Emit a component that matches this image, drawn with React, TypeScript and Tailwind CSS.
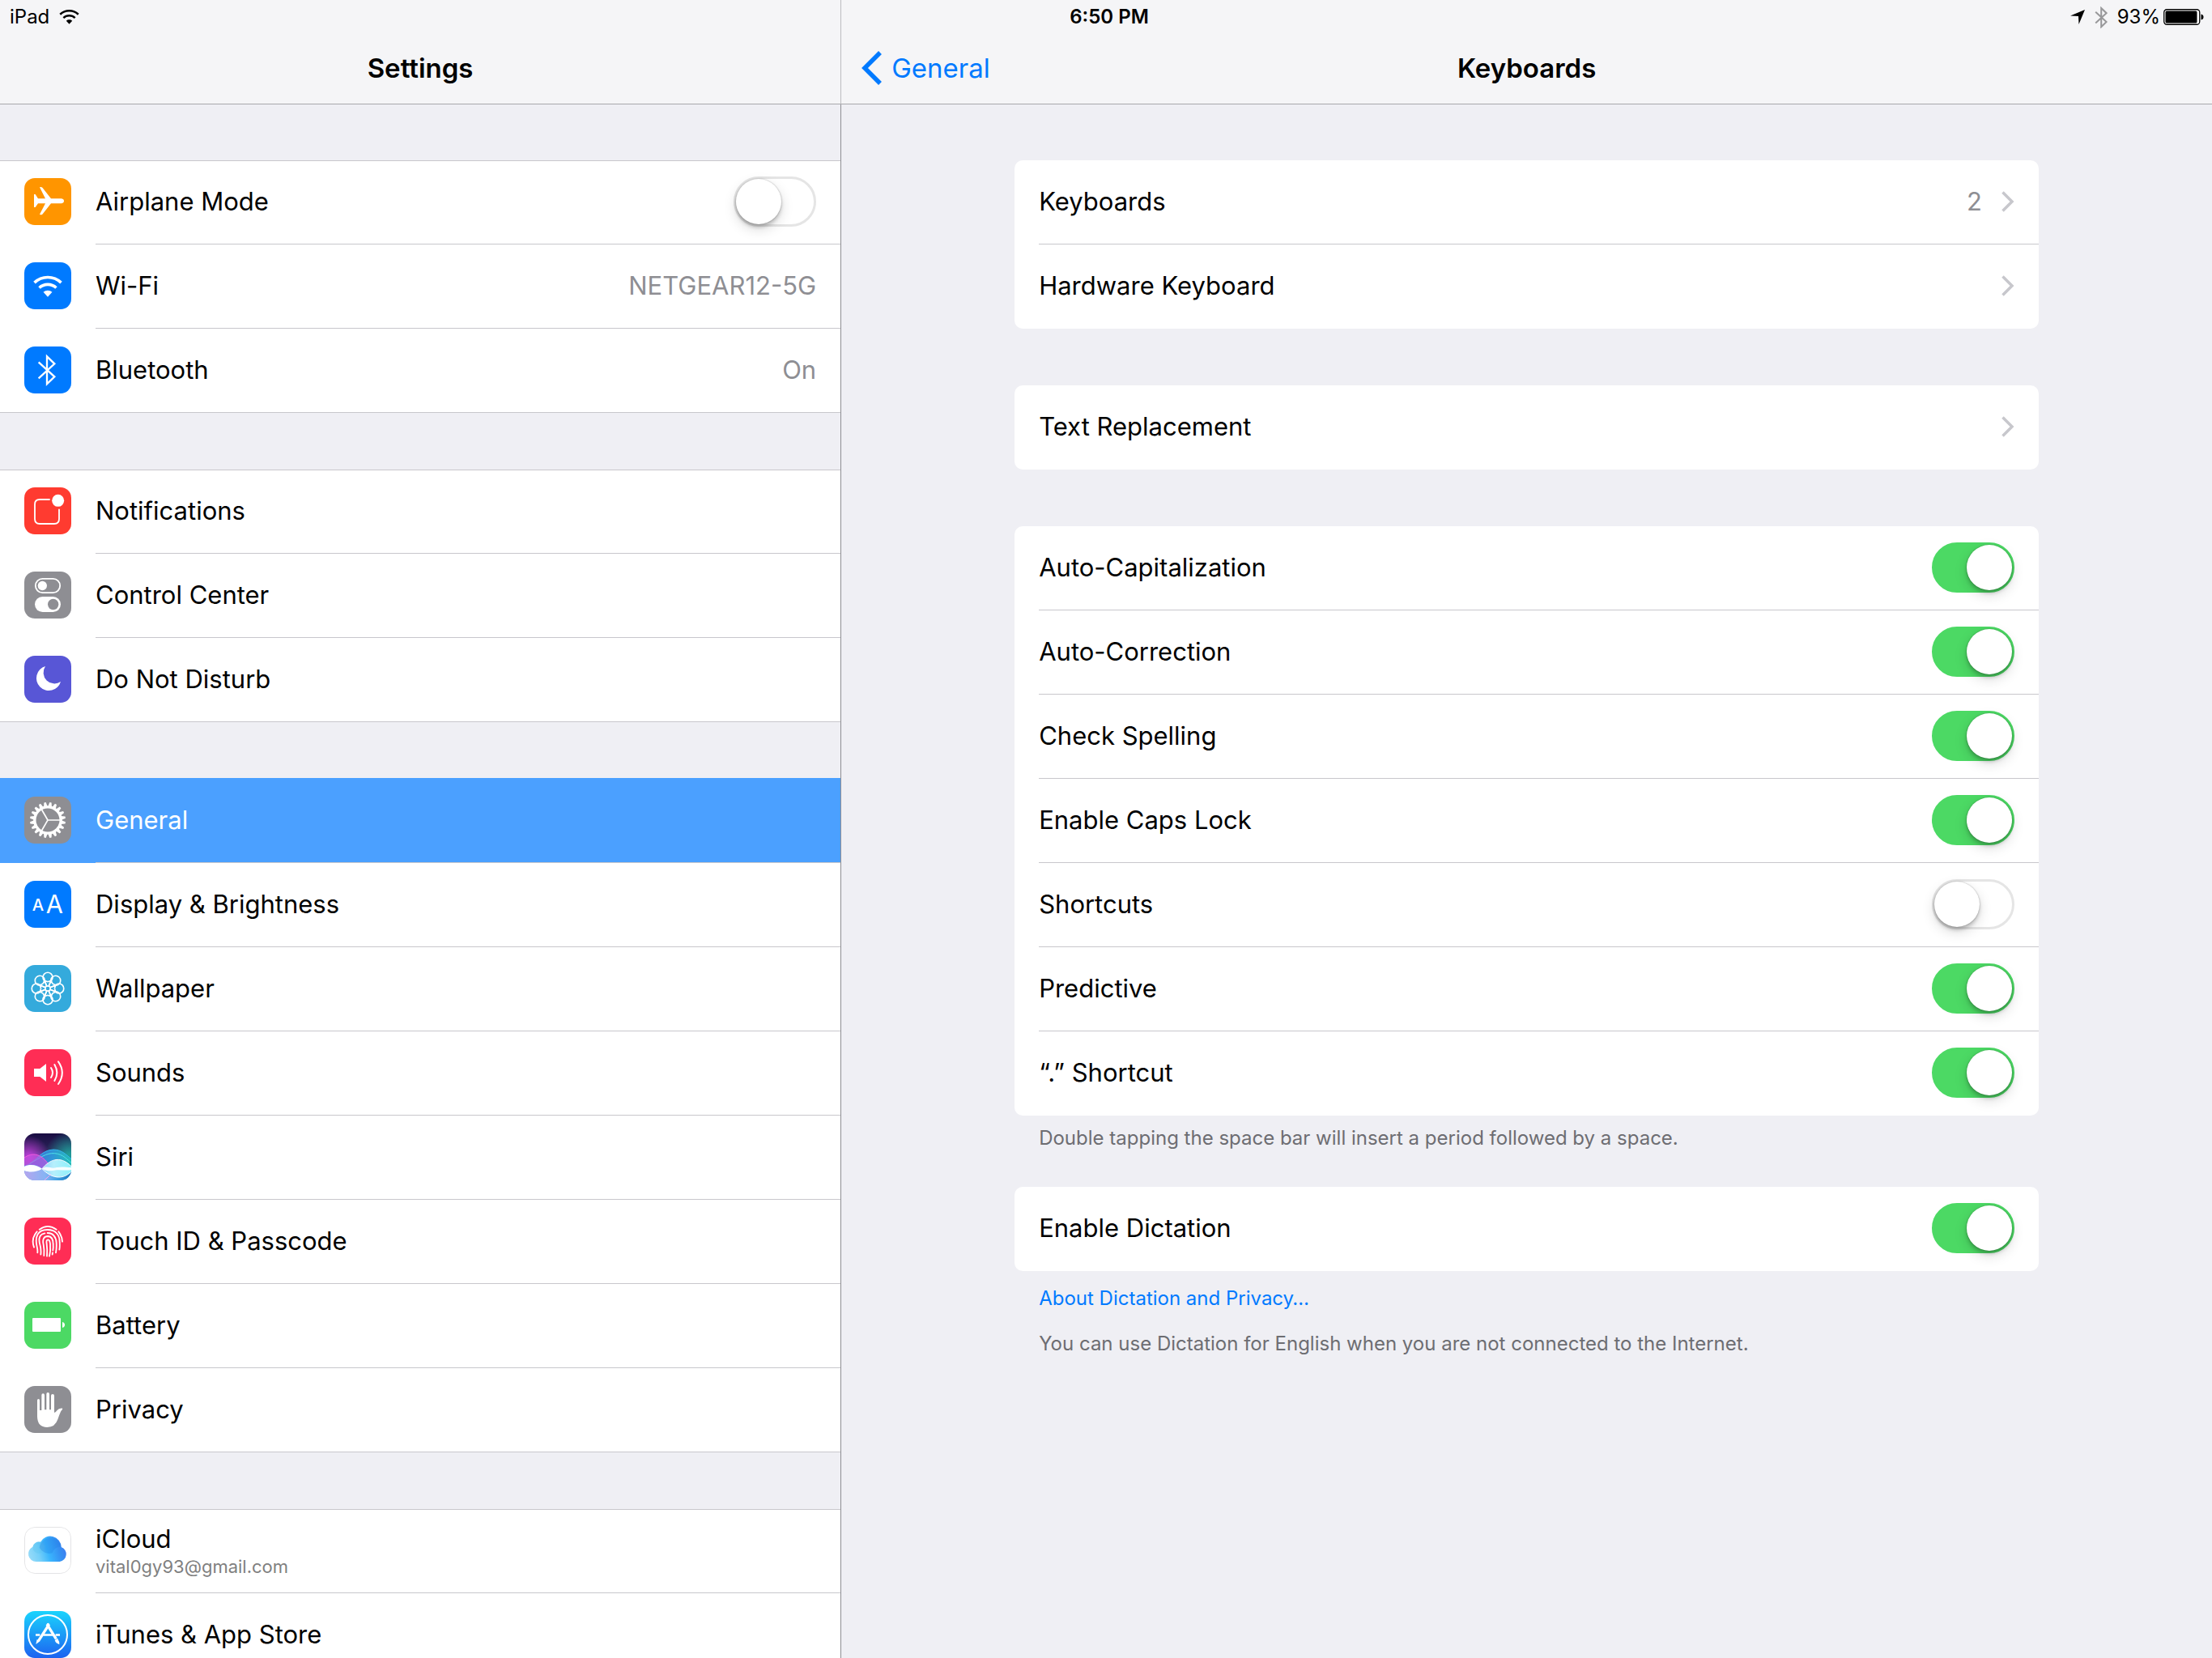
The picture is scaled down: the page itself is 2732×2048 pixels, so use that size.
import React, { useState } from "react";

/* ---------- Glyphs, drawn on a 174-unit tile ---------- */

function Tile({ className = "", children }: { className?: string; children: React.ReactNode }) {
  return (
    <svg viewBox="0 0 174 174" aria-hidden="true" className={`size-[58px] shrink-0 rounded-[13px] ${className}`}>
      {children}
    </svg>
  );
}

function WifiShape() {
  return (
    <>
      <g fill="none" stroke="currentColor" strokeWidth="11">
        <path d="M37.5 75.3A72 72 0 0 1 136.5 75.3" />
        <path d="M55.6 94.4A46 46 0 0 1 118.4 94.4" />
      </g>
      <path d="M87 128L70.6 110.4A24 24 0 0 1 103.4 110.4Z" fill="currentColor" />
    </>
  );
}

function BluetoothShape({ weight }: { weight: number }) {
  return (
    <path
      d="M53 58L112 112L84 139V37L112 64L53 118"
      fill="none"
      stroke="currentColor"
      strokeWidth={weight}
    />
  );
}

const AirplaneIcon = () => (
  <Tile className="bg-[#ff9500] text-white">
    <path
      fill="currentColor"
      d="M36 60H41L51 76H78L57 34Q62 32 67 35L99 76H138Q147 78 147 85Q147 92 138 94H99L67 134Q62 137 57 134L78 94H51L41 108H36Z"
    />
  </Tile>
);

const WifiIcon = () => (
  <Tile className="bg-[#007aff] text-white">
    <WifiShape />
  </Tile>
);

const BluetoothIcon = () => (
  <Tile className="bg-[#007aff] text-white">
    <BluetoothShape weight={7} />
  </Tile>
);

const NotificationsIcon = () => (
  <Tile className="bg-[#ff3b30]">
    <path
      d="M95 45H57Q39 45 39 63V117Q39 135 57 135H111Q129 135 129 117V80"
      fill="none"
      stroke="#fff"
      strokeWidth="5.5"
    />
    <circle cx="125" cy="49" r="22.5" fill="#fff" />
  </Tile>
);

const ControlCenterIcon = () => (
  <Tile className="bg-[#8e8e93]">
    <rect x="41.5" y="26.5" width="91" height="52" rx="26" fill="none" stroke="#fff" strokeWidth="5.5" />
    <circle cx="67" cy="52.5" r="17" fill="#fff" />
    <rect x="39" y="93" width="96" height="57" rx="28.5" fill="#fff" />
    <circle cx="107" cy="121.5" r="20" fill="#8e8e93" />
  </Tile>
);

const MoonIcon = () => (
  <Tile className="bg-[#5856d6]">
    <path d="M78 39A46 46 0 1 0 135 96A41 41 0 0 1 78 39Z" fill="#fff" />
  </Tile>
);

const teeth = Array.from({ length: 20 }, (_, i) => i * 18 + 9);

const GearIcon = () => (
  <Tile className="bg-[#8e8e93]">
    <g transform="translate(87 87)" fill="#fff">
      {teeth.map((a) => (
        <path key={a} transform={`rotate(${a})`} d="M-7 -50L-3.5 -66H3.5L7 -50Z" />
      ))}
      <circle r="48.5" fill="none" stroke="#fff" strokeWidth="10" />
      <g stroke="#fff" strokeWidth="5">
        {[0, 120, 240].map((a) => (
          <path key={a} transform={`rotate(${a})`} d="M0 0H46" />
        ))}
      </g>
    </g>
  </Tile>
);

const DisplayIcon = () => (
  <Tile className="bg-[#007aff]">
    <g fill="#fff" textAnchor="middle">
      <text x="51" y="111" fontSize="61" className="font-medium">A</text>
      <text x="112" y="120" fontSize="92">A</text>
    </g>
  </Tile>
);

const WallpaperIcon = () => (
  <Tile className="bg-[#34aadc]">
    <g transform="translate(87 87)" fill="none" stroke="#fff" strokeWidth="5">
      <circle r="9.5" />
      {[0, 45, 90, 135, 180, 225, 270, 315].map((a) => (
        <path
          key={a}
          transform={`rotate(${a})`}
          d="M0 -25L-14 -30A18 18 0 1 1 14 -30L0 -25M-4 -10L-17 -38M4 -10L17 -38"
        />
      ))}
    </g>
  </Tile>
);

const SoundsIcon = () => (
  <Tile className="bg-[#ff2d55]">
    <path d="M36 72H58L81 54V120L58 102H36Z" fill="#fff" />
    <g fill="none" stroke="#fff" strokeWidth="6" strokeLinecap="round">
      <path d="M99 69Q111 87 99 105" />
      <path d="M112 57Q130 87 112 117" />
      <path d="M126 46Q155 87 126 129" />
    </g>
  </Tile>
);

const SiriIcon = () => (
  <Tile>
    <defs>
      <linearGradient id="siri-sky" x1="0" y1="0" x2="0" y2="1">
        <stop offset="0" stopColor="#190c42" />
        <stop offset=".35" stopColor="#2a2358" />
        <stop offset=".6" stopColor="#3b6cae" />
        <stop offset="1" stopColor="#4aa0e0" />
      </linearGradient>
      <radialGradient id="siri-pink" cx=".1" cy=".5" r=".45">
        <stop offset="0" stopColor="#c23bd8" />
        <stop offset="1" stopColor="#c23bd8" stopOpacity="0" />
      </radialGradient>
      <radialGradient id="siri-teal" cx=".95" cy=".45" r=".5">
        <stop offset="0" stopColor="#1fa09a" />
        <stop offset="1" stopColor="#1fa09a" stopOpacity="0" />
      </radialGradient>
      <linearGradient id="siri-hill" x1="0" y1="0" x2="1" y2="0">
        <stop offset="0" stopColor="#3f5fd8" />
        <stop offset=".6" stopColor="#2f9be0" />
        <stop offset="1" stopColor="#25c0b8" />
      </linearGradient>
      <linearGradient id="siri-base" x1="0" y1="0" x2="1" y2="0">
        <stop offset="0" stopColor="#b5a5ee" />
        <stop offset=".45" stopColor="#86b4f4" />
        <stop offset=".7" stopColor="#3f9fe2" />
        <stop offset="1" stopColor="#1a78bd" />
      </linearGradient>
      <linearGradient id="siri-lens" x1="0" y1="0" x2="1" y2="0">
        <stop offset="0" stopColor="#8fd4fb" />
        <stop offset=".4" stopColor="#b6effc" />
        <stop offset="1" stopColor="#8cf1fb" />
      </linearGradient>
    </defs>
    <rect width="174" height="174" fill="url(#siri-sky)" />
    <rect width="174" height="174" fill="url(#siri-pink)" />
    <rect width="174" height="174" fill="url(#siri-teal)" />
    <path d="M0 122C40 112 60 60 108 60C140 60 158 82 174 94V140H0Z" fill="url(#siri-hill)" opacity=".9" />
    <path d="M0 122C40 112 60 60 108 60C140 60 158 82 174 94" fill="none" stroke="#35b4ee" strokeWidth="3" />
    <path d="M20 112C60 90 80 72 112 74C145 76 160 100 174 108" fill="none" stroke="#4fe0e6" strokeWidth="3" />
    <path d="M0 90C30 70 60 74 88 112L66 131L0 120Z" fill="#c453e0" opacity=".65" />
    <path d="M0 90C30 70 60 74 88 112" fill="none" stroke="#f25be0" strokeWidth="3" />
    <path d="M0 122C24 112 48 116 66 131L104 174H0Z" fill="#86b4f4" />
    <path d="M0 140C30 146 50 140 66 131C90 150 120 168 174 142V174H0Z" fill="url(#siri-base)" />
    <path d="M66 131C92 100 130 78 174 122V142C140 174 100 166 66 131Z" fill="url(#siri-lens)" />
    <path d="M0 123C22 112 46 118 66 131C46 143 22 146 0 138Z" fill="#fff" />
    <path d="M66 131C84 116 100 134 120 126C140 122 160 126 174 126V136C150 138 130 134 110 137C95 140 84 140 66 131Z" fill="#fff" opacity=".9" />
    <path d="M66 131C92 100 130 78 174 122M66 131C100 166 140 174 174 142" fill="none" stroke="#fff" strokeWidth="3" />
    <path d="M74 174L98 152" stroke="#f3a8f2" strokeWidth="3" />
  </Tile>
);

const TouchIdIcon = () => (
  <Tile className="bg-[#ff2d55]">
    <g fill="none" stroke="#fff" strokeWidth="5.5" strokeLinecap="round">
      <path d="M56 44Q87 21 119 44" />
      <path d="M47 52Q24 78 36 110" />
      <path d="M127 52Q140 69 141 89" />
      <path d="M49 130Q50 120 47 108C38 70 50 45 86 45C118 45 131 66 131 92Q132 108 130 119" />
      <path d="M61 137Q63 120 59 104C50 76 58 61 76 58" />
      <path d="M86 57C108 58 118 72 119 94Q120 116 117 130" />
      <path d="M73 141Q75 122 71 100C66 78 74 69 88 69C102 70 107 82 107 98Q108 112 106 122" />
      <path d="M105 130L104 137" />
      <path d="M84 143Q86 120 83 98C81 86 83 82 88 82C94 82 95 88 96 98Q98 124 93 143" />
    </g>
  </Tile>
);

const BatteryIcon = () => (
  <Tile className="bg-[#4cd964]">
    <rect x="30" y="60" width="105" height="51" rx="3" fill="#fff" />
    <path d="M141 75Q150 77 150 85.500Q150 94 141 96Z" fill="#fff" />
  </Tile>
);

const HandIcon = () => (
  <Tile className="bg-[#8e8e93]">
    <path
      fill="#fff"
      d="M48 53Q48 48 52.500 48Q57 48 57 53V90H64V34Q64 28 69.500 28Q75 28 75 34V88H82V30Q82 24 87.500 24Q93 24 93 30V88H99V36Q99 30 105 30Q111 30 111 36V99Q116 99 121 91Q129 81 142 83Q141 88 136 93Q131 103 124 124Q114 153 85 153Q48 153 48 112Z"
    />
  </Tile>
);

const ICloudIcon = () => (
  <Tile className="bg-white">
    <defs>
      <linearGradient id="cloud" x1="0" y1=".6" x2="1" y2=".4">
        <stop offset="0" stopColor="#94daf8" />
        <stop offset=".25" stopColor="#74cff9" />
        <stop offset=".5" stopColor="#3ab5fd" />
        <stop offset=".8" stopColor="#358ff2" />
        <stop offset="1" stopColor="#3f7bf0" />
      </linearGradient>
    </defs>
    <rect x="1.5" y="1.5" width="171" height="171" rx="38" fill="none" stroke="#e4e4e6" strokeWidth="3" />
    <path
      fill="url(#cloud)"
      d="M44 129A29 29 0 0 1 31 74A24 24 0 0 1 60 56A41 41 0 0 1 137 75A28 28 0 0 1 131 129Z"
    />
    <circle cx="54" cy="77" r="22" fill="#5cc3ee" opacity=".35" />
    <path d="M56 77A41 41 0 0 1 137 75A28 28 0 0 0 104 97A41 41 0 0 1 56 77Z" fill="#1f7fe6" opacity=".3" />
  </Tile>
);

const AppStoreIcon = () => (
  <Tile>
    <defs>
      <linearGradient id="store" x1="0" y1="0" x2="0" y2="1">
        <stop offset="0" stopColor="#1ad4fd" />
        <stop offset="1" stopColor="#1d62f0" />
      </linearGradient>
    </defs>
    <rect width="174" height="174" fill="url(#store)" />
    <circle cx="87" cy="87" r="72" fill="none" stroke="#fff" strokeWidth="6" />
    <g stroke="#fff" fill="none">
      <path d="M42 88.500H58M70 88.500H106M116 88.500H132" strokeWidth="8" />
      <path d="M92 49L53 110" strokeWidth="10" />
      <path d="M84 49L118 103" strokeWidth="10" />
    </g>
    <path d="M47 105L58 112L43 123Z" fill="#fff" />
    <path d="M113 108L123 101Q131 112 130 124Q116 119 113 108Z" fill="#fff" />
    <circle cx="88" cy="49" r="5" fill="#fff" />
  </Tile>
);

/* ---------- Controls ---------- */

function Toggle({ id, initial }: { id: string; initial: boolean }) {
  const [on, setOn] = useState(initial);
  return (
    <input
      id={id}
      type="checkbox"
      role="switch"
      checked={on}
      onChange={(e) => setOn(e.target.checked)}
      className="flex h-[62px] w-[102px] shrink-0 cursor-pointer appearance-none items-center rounded-full border-[3px] border-[#e5e5e5] bg-white before:size-[56px] before:rounded-full before:bg-white before:shadow-[0_6px_16px_rgba(0,0,0,0.15),0_4px_4px_rgba(0,0,0,0.18),0_0_2px_rgba(0,0,0,0.3)] before:content-[''] checked:justify-end checked:border-[#4cd964] checked:bg-[#4cd964]"
    />
  );
}

function Chevron() {
  return (
    <svg viewBox="0 0 16 26" aria-hidden="true" className="h-[26px] w-4 shrink-0 text-[#c7c7cc]">
      <path d="M1.500 1.500L13 13L1.500 24.500" fill="none" stroke="currentColor" strokeWidth="3.500" />
    </svg>
  );
}

/* ---------- Sidebar ---------- */

type Item = {
  label: string;
  icon: React.ReactNode;
  value?: string;
  detail?: string;
  toggle?: boolean;
  selected?: boolean;
};

const sidebarGroups: Item[][] = [
  [
    { label: "Airplane Mode", icon: <AirplaneIcon />, toggle: true },
    { label: "Wi-Fi", icon: <WifiIcon />, value: "NETGEAR12-5G" },
    { label: "Bluetooth", icon: <BluetoothIcon />, value: "On" },
  ],
  [
    { label: "Notifications", icon: <NotificationsIcon /> },
    { label: "Control Center", icon: <ControlCenterIcon /> },
    { label: "Do Not Disturb", icon: <MoonIcon /> },
  ],
  [
    { label: "General", icon: <GearIcon />, selected: true },
    { label: "Display & Brightness", icon: <DisplayIcon /> },
    { label: "Wallpaper", icon: <WallpaperIcon /> },
    { label: "Sounds", icon: <SoundsIcon /> },
    { label: "Siri", icon: <SiriIcon /> },
    { label: "Touch ID & Passcode", icon: <TouchIdIcon /> },
    { label: "Battery", icon: <BatteryIcon /> },
    { label: "Privacy", icon: <HandIcon /> },
  ],
  [
    { label: "iCloud", icon: <ICloudIcon />, detail: "vital0gy93@gmail.com" },
    { label: "iTunes & App Store", icon: <AppStoreIcon /> },
  ],
];

function SidebarRow({ item, last }: { item: Item; last: boolean }) {
  const line = last
    ? "shadow-[inset_0_-1px_0_#c8c7cc]"
    : "bg-[linear-gradient(#c8c7cc,#c8c7cc)] bg-[length:calc(100%-118px)_1px] bg-bottom-right bg-no-repeat";
  const tone = item.selected ? "bg-[#4ba0ff] text-white shadow-[0_-1px_0_#4ba0ff]" : "";
  const cls = `flex h-[104px] items-center gap-[30px] px-[30px] pb-0.5 ${line} ${tone}`;
  const body = (
    <>
      {item.icon}
      <span className="flex min-w-0 flex-1 flex-col">
        <span className="leading-10">{item.label}</span>
        {item.detail && <span className="text-[22px] leading-7 text-[#808080]">{item.detail}</span>}
      </span>
      {item.value && <span className="text-[#8e8e93]">{item.value}</span>}
      {item.toggle && <Toggle id="airplane" initial={false} />}
    </>
  );
  return (
    <li>
      {item.toggle ? (
        <label htmlFor="airplane" className={cls}>
          {body}
        </label>
      ) : (
        <a href="#" aria-current={item.selected ? "page" : undefined} className={cls}>
          {body}
        </a>
      )}
    </li>
  );
}

/* ---------- Detail pane ---------- */

function Card({ children }: { children: React.ReactNode }) {
  return <ul className="overflow-hidden rounded-[10px] bg-white">{children}</ul>;
}

const rowLine =
  "[li:not(:last-child)>&]:bg-[linear-gradient(#c8c7cc,#c8c7cc)] bg-[length:calc(100%-30px)_1px] bg-bottom-right bg-no-repeat";

function LinkRow({ label, value }: { label: string; value?: string }) {
  return (
    <li>
      <a href="#" className={`flex h-[104px] items-center gap-6 px-[30px] pb-0.5 ${rowLine}`}>
        <span className="flex-1">{label}</span>
        {value && <span className="text-[#8e8e93]">{value}</span>}
        <Chevron />
      </a>
    </li>
  );
}

function ToggleRow({ id, label, on }: { id: string; label: string; on: boolean }) {
  return (
    <li>
      <label htmlFor={id} className={`flex h-[104px] items-center gap-6 px-[30px] pb-0.5 ${rowLine}`}>
        <span className="flex-1">{label}</span>
        <Toggle id={id} initial={on} />
      </label>
    </li>
  );
}

const typingOptions = [
  { id: "caps", label: "Auto-Capitalization", on: true },
  { id: "correct", label: "Auto-Correction", on: true },
  { id: "spelling", label: "Check Spelling", on: true },
  { id: "capslock", label: "Enable Caps Lock", on: true },
  { id: "shortcuts", label: "Shortcuts", on: false },
  { id: "predictive", label: "Predictive", on: true },
  { id: "period", label: "“.” Shortcut", on: true },
];

function StatusBar() {
  return (
    <div className="absolute inset-x-0 top-0 grid h-[42px] grid-cols-3 items-center pr-2.5 pl-3 text-[24px] leading-10">
      <div className="flex items-center gap-3">
        <span>iPad</span>
        <svg viewBox="32 50 110 79" aria-label="Wi-Fi" className="h-[18px] w-[25px]">
          <WifiShape />
        </svg>
      </div>
      <div className="pl-1.5 text-center font-semibold">6:50 PM</div>
      <div className="flex items-center justify-end">
        <svg viewBox="0 0 18 18" aria-label="Location" className="mr-3 size-[18px]">
          <path d="M18 0L10.500 18L10 8L0 7.500Z" fill="currentColor" />
        </svg>
        <svg viewBox="49 28 68 119" aria-label="Bluetooth" className="mr-3 h-[27px] w-4 text-[#98989a]">
          <BluetoothShape weight={9} />
        </svg>
        <span className="mr-1">93%</span>
        <svg viewBox="0 0 50 20" aria-label="Battery" className="h-5 w-[50px]">
          <rect x=".75" y=".75" width="44" height="18.500" rx="3.500" fill="#fff" stroke="currentColor" strokeWidth="1.300" />
          <rect x="2.500" y="2.500" width="39" height="15" rx="1.500" fill="currentColor" />
          <path d="M46.500 6.500Q49.500 7 49.500 10Q49.500 13 46.500 13.500Z" fill="currentColor" />
        </svg>
      </div>
    </div>
  );
}

export default function App() {
  return (
    <div className="relative flex h-screen overflow-hidden bg-[#efeff4] font-['Inter','Liberation_Sans',sans-serif] text-[31px] leading-10 text-black">
      <nav aria-label="Settings" className="flex w-[38%] flex-col overflow-hidden">
        <header className="flex h-[129px] shrink-0 items-center justify-center border-b border-[#a7a7ab] bg-[#f5f5f7] pt-10">
          <h1 className="text-[33px] font-semibold">Settings</h1>
        </header>
        <div className="flex flex-col gap-[70px] pt-[69px]">
          {sidebarGroups.map((group, i) => (
            <ul key={i} className="shrink-0 bg-white shadow-[inset_0_1px_0_#c8c7cc]">
              {group.map((item, j) => (
                <SidebarRow key={item.label} item={item} last={j === group.length - 1} />
              ))}
            </ul>
          ))}
        </div>
      </nav>

      <main className="flex min-w-0 flex-1 flex-col">
        <header className="grid h-[129px] shrink-0 grid-cols-[1fr_auto_1fr] items-center border-b border-l border-b-[#a7a7ab] border-l-[#bcbcc0] bg-[#f5f5f7] pt-10">
          <a href="#" className="flex items-center gap-3 pl-[25px] text-[33px] text-[#007aff]">
            <svg viewBox="0 0 25 42" aria-hidden="true" className="h-[42px] w-[25px]">
              <path d="M23 2L4 21L23 40" fill="none" stroke="currentColor" strokeWidth="5.500" />
            </svg>
            General
          </a>
          <h2 className="text-[33px] font-semibold">Keyboards</h2>
        </header>
        <div className="flex flex-1 flex-col border-l border-[#8e8e93] px-[214px] pt-[69px]">
          <div className="flex flex-col gap-[70px]">
            <Card>
              <LinkRow label="Keyboards" value="2" />
              <LinkRow label="Hardware Keyboard" />
            </Card>
            <Card>
              <LinkRow label="Text Replacement" />
            </Card>
            <Card>
              {typingOptions.map((o) => (
                <ToggleRow key={o.id} {...o} />
              ))}
            </Card>
          </div>
          <p className="px-[30px] pt-3 pb-11 text-[24px] leading-8 text-[#6d6d72]">
            Double tapping the space bar will insert a period followed by a space.
          </p>
          <Card>
            <ToggleRow id="dictation" label="Enable Dictation" on />
          </Card>
          <div className="flex flex-col items-start gap-6 px-[30px] pt-[18px] text-[24px] leading-8 text-[#6d6d72]">
            <a href="#" className="text-[#007aff]">
              About Dictation and Privacy…
            </a>
            <p>You can use Dictation for English when you are not connected to the Internet.</p>
          </div>
        </div>
      </main>

      <StatusBar />
    </div>
  );
}
